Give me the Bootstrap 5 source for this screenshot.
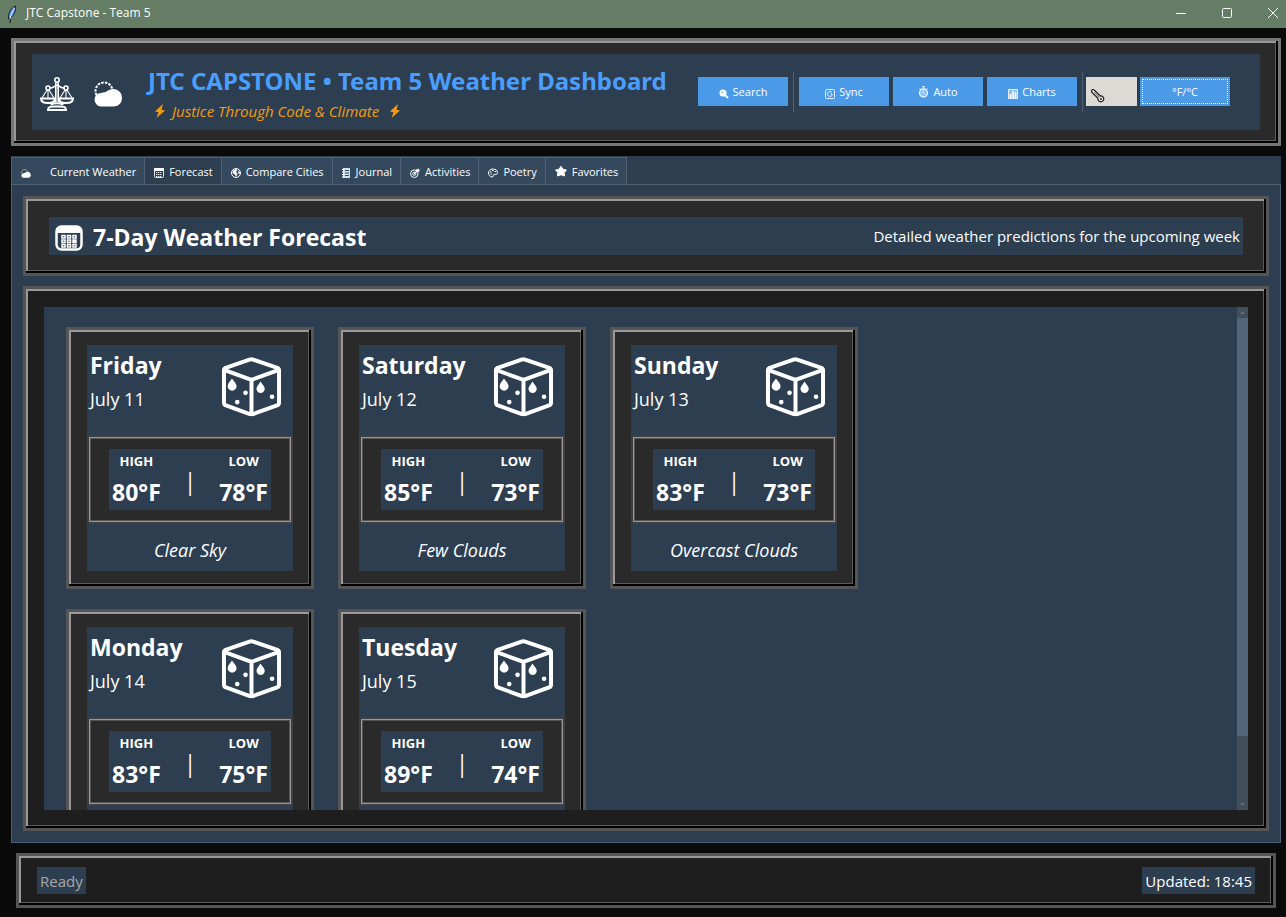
<!DOCTYPE html>
<html lang="en">
<head>
<meta charset="utf-8">
<meta name="viewport" content="width=device-width, initial-scale=1">
<title>JTC Capstone - Team 5</title>
<link href="https://cdn.jsdelivr.net/npm/bootstrap@5.3.0/dist/css/bootstrap.min.css" rel="stylesheet">
<style>
  :root { --panel: #2c3e50; --tab: #34495e; --line: #4f6173; --edge: #555; --lit: #999; --dim: #5c5c5c; }
  body { font: 15px/20px "Open Sans", "Noto Sans", sans-serif; background: #0a0a0a; color: #fff; overflow: hidden; }
  svg { display: block; flex: none; }
  .titlebar { height: 28px; background: #647d64; font-size: 12px; padding-left: 5px; }
  .titlebar span { margin: 0 auto 2px 7px; }
  .titlebar button { width: 46px; height: 28px; border: 0; background: none; color: #fff; padding: 0 18px 2px; }
  .titlebar button:last-child { width: 36px; padding-right: 8px; }
  .shell { padding: 10px 5px 9px 11px; gap: 10px; min-height: 0; }
  .ridge { border: 3px solid var(--edge); background: #2a2a2a;
    box-shadow: inset -2px -2px 0 #000, inset 2px 2px 0 var(--lit), inset -3px -3px 0 var(--dim); }
  .panel { background: var(--panel); }

  .masthead { --edge: #777; padding: 13px 18px; }
  .masthead .panel { height: 76px; padding-right: 30px; }
  .brand { margin: 0; font-family: "Noto Sans", "Open Sans", sans-serif; font-size: 24px; line-height: 32px; font-weight: 700; color: #4a9eff; }
  .brand-text { padding-top: 6px; }
  .motto { color: #f39c12; font-style: italic; line-height: 28px; gap: 6px; padding-left: 6px; }
  .brand-icons { gap: 20px; padding: 3px 26px 0 8px; }
  .toolbar { padding-bottom: 1px; }
  .tool { width: 90px; height: 29px; padding: 0; border: 0; border-radius: 0; background: #4a9ae8; color: #fff; font-size: 11px; line-height: 29px; }
  .tool:hover { background: #5fa8ef; color: #fff; }
  .tool svg { margin-top: 4px; }
  .tool.focused { outline: 1px dotted #fff; outline-offset: -3px; }
  .rule { width: 1px; height: 40px; margin: 0 5px; background: var(--line); }
  .gauge { width: 51px; height: 29px; background: #dcdad5; margin: 0 3px; padding: 11px 0 0 4px; }

  .book { background: var(--panel); min-height: 0; }
  .book .nav-tabs { border: 0; height: 28px; padding-top: 1px; --bs-nav-tabs-border-width: 0; }
  .book .nav-link { height: 28px; margin: 0; padding: 0 8px 0 9px; border: solid var(--line); border-width: 1px 1px 1px 0; border-radius: 0;
    background: var(--tab); color: #fff; font-size: 11px; line-height: 27px; display: flex; align-items: center; gap: 5px; }
  .book .nav-item:first-child .nav-link { border-left-width: 1px; gap: 19px; }
  .book .nav-link.active { background: var(--panel); color: #fff; border-color: var(--line); border-bottom-color: var(--panel); }
  .book .nav-link svg { margin-top: 4px; }
  .page { border: 1px solid var(--line); padding: 11px; gap: 10px; min-height: 0; }
  .heading { padding: 18px 23px; }
  .heading .panel { height: 38px; padding: 0 3px 0 6px; }
  .heading h1 { margin: 2px auto 0 10px; font-size: 23px; line-height: 38px; font-weight: 700; }
  .stage { background: #1e1e1e; padding: 18px; min-height: 0; }
  .view { overflow: hidden; min-height: 0; }
  .days { display: grid; grid-template-columns: repeat(auto-fill, 248px); gap: 20px 24px; padding: 20px 22px; max-width: 860px; }
  .bar { width: 11px; background: #424f5a; }
  .bar span { height: 11px; padding: 4px 3px; }
  .bar i { background: #52667a; flex: 0 1 418px; }

  .day { padding: 15px 18px; }
  .day-top { height: 90px; padding: 4px 10px 0 3px; }
  .day h2 { margin: 0; font-size: 23px; line-height: 32px; font-weight: 700; }
  .date { font-size: 18px; line-height: 36px; }
  .day-top svg { margin-top: 7px; }
  .temps { border: 2px solid #3f3f3f; background: #2a2a2a; box-shadow: inset 0 0 0 1px var(--lit), inset 0 0 0 2px #555; padding: 12px 20px; }
  .temps .panel { height: 61px; padding: 0 3px; }
  .temps dl { margin: 0; text-align: center; }
  .temps dt { font-size: 13px; line-height: 24px; font-weight: 700; }
  .temps dd { margin: 0; font-size: 23px; line-height: 38px; font-weight: 700; }
  .pipe { color: #fff6e6; font-size: 23px; line-height: 64px; }
  .sky { height: 47px; margin: 0; font-size: 18px; line-height: 52px; font-style: italic; text-align: center; }

  .status { margin: 0 5px; padding: 11px 18px; background: #1e1e1e; }
  .status span { height: 27px; padding: 0 3px; line-height: 29px; }
  .status span:first-child { color: #a8a8a8; }
</style>
</head>
<body class="vh-100 d-flex flex-column">

<svg width="0" height="0" class="position-absolute" aria-hidden="true">
  <symbol id="cloud" viewBox="0 0 28 26">
    <circle cx="10" cy="10" r="8.500" fill="none" stroke="currentColor" stroke-width="2" stroke-dasharray="2.500 1.200"/>
    <path d="M8 25.500a7 7 0 0 1-7.500-7A7.200 7.200 0 0 1 7 12c3-.5 5-1 7-2.500a9 9 0 0 1 14 7.500c0 5-4 8.500-8.500 8.500z" fill="currentColor"/>
  </symbol>
  <symbol id="calendar" viewBox="0 0 28 26">
    <rect x="1.500" y="1.500" width="25" height="23" rx="5" fill="none" stroke="currentColor" stroke-width="2.500"/>
    <path d="M1 8V6a5 5 0 0 1 5-5h16a5 5 0 0 1 5 5v2z" fill="currentColor"/>
    <g fill="none" stroke="currentColor" stroke-width="1.500">
      <path d="M7 10.500h3v2.500H7zM12.500 10.500h3v2.500h-3zM18 10.500h3v2.500h-3zM7 15h3v2.500H7zM12.500 15h3v2.500h-3zM7 19.500h3V22H7zM12.500 19.500h3V22h-3zM18 19.500h3V22h-3z"/>
      <path d="M18 15h3v2.500h-3z" fill="currentColor"/>
    </g>
  </symbol>
  <symbol id="bolt" viewBox="0 0 12 14"><path d="M9 0 1 7.500l3.500.8L2.500 14 11 6.500l-3.500-.8z" fill="currentColor"/></symbol>
  <symbol id="cube" viewBox="600 230 190 190">
    <g fill="none" stroke="currentColor" stroke-width="12" stroke-linejoin="round">
      <path d="M689 241 617 266q-5 2-5 7v97q0 7 6 9l72 26q5 2 10 0l72-26q6-2 6-9v-97q0-5-5-7l-73-25q-5-2-11 0z"/>
      <path d="m612 272 83 30 83-30M695 302v103"/>
    </g>
    <g fill="currentColor">
      <path d="M636 298c5 8 14 15 14 23a13 13 0 0 1-27 0c0-8 8-15 13-23zM722 307c5 8 13 15 13 22a12.500 12.500 0 0 1-25 0c0-7 8-14 12-22z"/>
      <circle cx="677" cy="341" r="7"/><circle cx="652" cy="369" r="7"/><circle cx="757" cy="353" r="7"/>
    </g>
  </symbol>
</svg>

<header class="titlebar d-flex align-items-center">
  <svg width="14" height="18" viewBox="0 0 14 18"><path d="M5 18 6 11" stroke="#111"/><path d="M10.500 1C6 3 3 8 3.500 14 8 12 11 7 10.500 1z" fill="#5b9be8" stroke="#142033"/><path d="M9.500 3C7.500 6 6 10 5 14" stroke="#dcecff" fill="none"/></svg>
  <span>JTC Capstone - Team 5</span>
  <button type="button" aria-label="Minimize"><svg width="10" height="10"><path d="M0 5.500h10" stroke="currentColor"/></svg></button>
  <button type="button" aria-label="Maximize"><svg width="10" height="10"><rect x=".5" y=".5" width="9" height="9" rx="1" fill="none" stroke="currentColor"/></svg></button>
  <button type="button" aria-label="Close"><svg width="10" height="10"><path d="m0 0 10 10M10 0 0 10" stroke="currentColor"/></svg></button>
</header>

<div class="shell d-flex flex-column flex-grow-1">
  <section class="ridge masthead">
    <div class="panel d-flex align-items-center">
      <div class="brand-icons d-flex align-items-center">
        <svg width="34" height="34" viewBox="0 0 34 34" fill="none" stroke="#fff" stroke-width="1.600">
          <circle cx="17" cy="3" r="2.200"/><path d="M15.800 5.500v20M18.200 5.500v20M10 11c4 0 4-2.500 7-2.500s3 2.500 7 2.500"/>
          <circle cx="8" cy="11" r="2"/><circle cx="26" cy="11" r="2"/>
          <path d="m7 13-5 8M9 13l5 8M8 13v8M25 13l-5 8M27 13l5 8M26 13v8" stroke-width="1.100"/>
          <path d="M1 21.500h14c0 3-3 4.500-7 4.500s-7-1.500-7-4.500zM19 21.500h14c0 3-3 4.500-7 4.500s-7-1.500-7-4.500zM11 28c2-2.500 10-2.500 12 0M8 33c0-4 3-3.500 9-3.500s9-.5 9 3.500z" stroke-width="2"/>
        </svg>
        <svg width="28" height="26"><use href="#cloud"/></svg>
      </div>
      <div class="brand-text">
        <h1 class="brand">JTC CAPSTONE • Team 5 Weather Dashboard</h1>
        <div class="motto d-flex align-items-center">
          <svg width="12" height="14"><use href="#bolt"/></svg>Justice Through Code &amp; Climate
          <svg width="12" height="14" class="ms-1"><use href="#bolt"/></svg>
        </div>
      </div>
      <div class="toolbar d-flex align-items-center ms-auto">
        <button type="button" class="btn tool d-flex align-items-center justify-content-center gap-1">
          <svg width="10" height="10" viewBox="0 0 10 10"><circle cx="4" cy="4" r="3.500" fill="#fff"/><circle cx="3.500" cy="3.500" r="1.500" fill="#b9dbff"/><path d="m6 6 3 3" stroke="#fff" stroke-width="2"/></svg>Search</button>
        <span class="rule"></span>
        <button type="button" class="btn tool d-flex align-items-center justify-content-center gap-1">
          <svg width="10" height="10" viewBox="0 0 10 10" fill="none" stroke="#dff0ff"><rect x=".5" y=".5" width="9" height="9" rx="1"/><path d="M7 3.500a2.500 2.500 0 1 0 0 3V5H5.500"/></svg>Sync</button>
        <button type="button" class="btn tool d-flex align-items-center justify-content-center gap-1 ms-1">
          <svg width="11" height="12" viewBox="0 0 11 12" fill="none" stroke="#e8f4ff" class="mt-0"><circle cx="5.500" cy="7" r="4" fill="#86bdf5" stroke-width="1.300"/><path d="M4 .7h3M5.500 1v2M1.500 2.500l1.500 1M9.500 2.500 8 3.500"/><path d="M5.500 4.500V7l2 1.500M3.500 7h1" stroke-width=".8"/></svg>Auto</button>
        <button type="button" class="btn tool d-flex align-items-center justify-content-center gap-1 ms-1">
          <svg width="10" height="10" viewBox="0 0 10 10"><rect x=".5" y=".5" width="9" height="9" fill="#8ac0f8" stroke="#dff0ff"/><path d="M2.500 9V5M5 9V2M7.500 9V3" stroke="#fff" stroke-width="1.600"/></svg>Charts</button>
        <span class="rule me-0"></span>
        <span class="gauge"><svg width="16" height="16" viewBox="0 0 16 16"><path d="M1.500 3Q2 .8 4.200 2l6 6a2.900 2.900 0 1 1-2.200 2.200L2 4.500z" fill="#eee" stroke="#222" stroke-width="1.300"/><circle cx="11" cy="11" r="1" fill="#222"/><path d="m4 4 5.500 5.500" stroke="#777"/></svg></span>
        <button type="button" class="btn tool focused">°F/°C</button>
      </div>
    </div>
  </section>

  <main class="book d-flex flex-column flex-grow-1">
    <ul class="nav nav-tabs" role="tablist">
      <li class="nav-item"><button class="nav-link" role="tab" type="button"><svg width="10" height="9"><use href="#cloud"/></svg>Current Weather</button></li>
      <li class="nav-item"><button class="nav-link active" role="tab" type="button" aria-selected="true"><svg width="10" height="10" viewBox="0 0 10 10"><rect x=".5" y=".5" width="9" height="9" rx="1" fill="none" stroke="#dfe6ec"/><path d="M0 0h10v3H0z" fill="#fff"/><path d="M2 4.500h6M2 6.500h6M2 8.500h6" stroke="#dfe6ec" stroke-dasharray="1.400 .6"/></svg>Forecast</button></li>
      <li class="nav-item"><button class="nav-link" role="tab" type="button"><svg width="10" height="10" viewBox="0 0 10 10"><circle cx="5" cy="5" r="4.500" fill="none" stroke="#fff"/><path d="M2 2.500 5 1l1.500 1L5 4l1.500 2L5 9 4 6.500 1.500 5zM7.500 3 9 4 8.500 6.500 7 5z" fill="#fff"/></svg>Compare Cities</button></li>
      <li class="nav-item"><button class="nav-link" role="tab" type="button"><svg width="9" height="10" viewBox="0 0 9 10"><rect x="1" width="7" height="10" fill="#cfe0e8"/><path d="M3 2.500h4M3 5h4M3 7.500h4" stroke="#34495e"/><path d="M0 1.500h2M0 4h2M0 6.500h2M0 9h2" stroke="#fff"/></svg>Journal</button></li>
      <li class="nav-item"><button class="nav-link" role="tab" type="button"><svg width="10" height="10" viewBox="0 0 10 10" fill="none" stroke="#fff"><circle cx="4.300" cy="5.700" r="3.800"/><circle cx="4.300" cy="5.700" r="1.600"/><path d="M4 6 9 1M7 1v2h2.500" stroke-width="1.300"/></svg>Activities</button></li>
      <li class="nav-item"><button class="nav-link" role="tab" type="button"><svg width="10" height="10" viewBox="0 0 10 10"><path d="M5 1C2 1 .5 3 .5 5S2 9 4.500 9c1.500 0 0-2 1.500-2.500s3.500.5 3.500-2C9.500 2.500 7.500 1 5 1z" fill="none" stroke="#fff"/><path d="M2 4h1.500M4 2.500h1.500M6.500 3.500H8M2.500 6H4" stroke="#fff"/></svg>Poetry</button></li>
      <li class="nav-item"><button class="nav-link" role="tab" type="button"><svg width="12" height="12" viewBox="0 0 13 12" class="mt-0"><path d="m6.500.8 2 3.200 3.900.9-2.500 2.900.5 3.600-3.900-1.300-3.900 1.300.5-3.600L.6 4.900 4.500 4z" fill="#fff" stroke="#fff" stroke-linejoin="round"/></svg>Favorites</button></li>
    </ul>

    <div class="page d-flex flex-column flex-grow-1">
      <section class="ridge heading">
        <div class="panel d-flex align-items-center">
          <svg width="28" height="26" class="mt-1"><use href="#calendar"/></svg>
          <h1>7-Day Weather Forecast</h1>
          <span>Detailed weather predictions for the upcoming week</span>
        </div>
      </section>

      <section class="ridge stage d-flex flex-grow-1">
        <div class="view panel flex-grow-1"><div class="days" id="days"></div></div>
        <div class="bar d-flex flex-column" aria-hidden="true">
          <span><svg width="5" height="3"><path d="M0 3 2.500 0 5 3z" fill="#5f7488"/></svg></span>
          <i></i>
          <span class="mt-auto"><svg width="5" height="3"><path d="M0 0h5L2.500 3z" fill="#5f7488"/></svg></span>
        </div>
      </section>
    </div>
  </main>

  <footer class="ridge status d-flex justify-content-between">
    <span class="panel">Ready</span>
    <span class="panel">Updated: 18:45</span>
  </footer>
</div>

<script src="https://cdn.jsdelivr.net/npm/bootstrap@5.3.0/dist/js/bootstrap.bundle.min.js"></script>
<script>
  const forecast = [
    ["Friday", "July 11", 80, 78, "Clear Sky"],
    ["Saturday", "July 12", 85, 73, "Few Clouds"],
    ["Sunday", "July 13", 83, 73, "Overcast Clouds"],
    ["Monday", "July 14", 83, 75, ""],
    ["Tuesday", "July 15", 89, 74, ""]
  ];
  document.getElementById("days").innerHTML = forecast.map(([day, date, high, low, sky]) => `
    <article class="ridge day"><div class="panel">
      <div class="day-top d-flex justify-content-between">
        <div><h2>${day}</h2><div class="date">${date}</div></div>
        <svg width="63" height="63"><use href="#cube"/></svg>
      </div>
      <div class="temps"><div class="panel d-flex justify-content-between">
        <dl><dt>HIGH</dt><dd>${high}°F</dd></dl><span class="pipe">|</span><dl><dt>LOW</dt><dd>${low}°F</dd></dl>
      </div></div>
      <p class="sky">${sky}</p>
    </div></article>`).join("");
</script>
</body>
</html>
